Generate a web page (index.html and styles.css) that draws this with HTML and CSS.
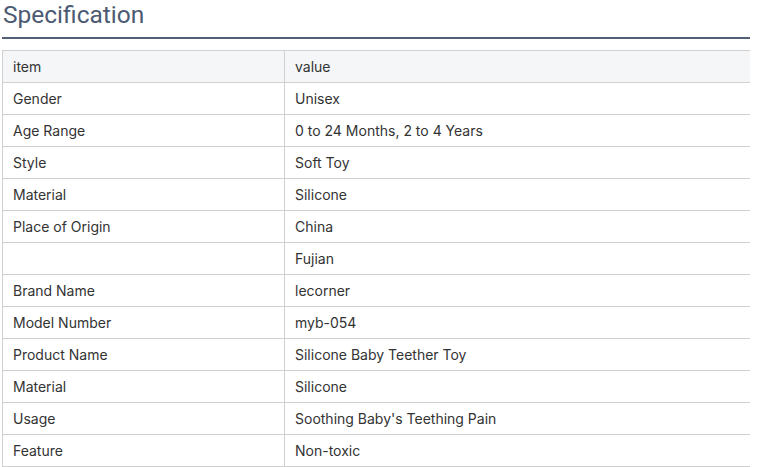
FILE: index.html
```html
<!DOCTYPE html>
<html>
<head>
<meta charset="utf-8">
<link rel="stylesheet" href="styles.css">
</head>
<body>
<div class="spec">
  <h2 class="title">Specification</h2>
  <table class="grid">
    <tr class="head"><td>item</td><td>value</td></tr>
    <tr><td>Gender</td><td>Unisex</td></tr>
    <tr><td>Age Range</td><td>0 to 24 Months, 2 to 4 Years</td></tr>
    <tr><td>Style</td><td>Soft Toy</td></tr>
    <tr><td>Material</td><td>Silicone</td></tr>
    <tr><td>Place of Origin</td><td>China</td></tr>
    <tr><td></td><td>Fujian</td></tr>
    <tr><td>Brand Name</td><td>lecorner</td></tr>
    <tr><td>Model Number</td><td>myb-054</td></tr>
    <tr><td>Product Name</td><td>Silicone Baby Teether Toy</td></tr>
    <tr><td>Material</td><td>Silicone</td></tr>
    <tr><td>Usage</td><td>Soothing Baby's Teething Pain</td></tr>
    <tr><td>Feature</td><td>Non-toxic</td></tr>
  </table>
</div>
</body>
</html>
```
FILE: styles.css
```css
html, body { margin: 0; padding: 0; background: #fff; }
.spec { width: 748px; margin-left: 2px; }
.title {
  margin: 0;
  font-family: Roboto, "Noto Sans", sans-serif;
  font-weight: 400;
  font-size: 24.5px;
  line-height: 30px;
  padding: 0 0 0 1px;
  height: 37px;
  color: #4c5a72;
  border-bottom: 2px solid #525f74;
}
.grid {
  margin-top: 11px;
  width: 748px;
  border-collapse: collapse;
  font-family: Inter, "Noto Sans", sans-serif;
  font-size: 14px;
  color: #333;
}
.grid td {
  height: 31px;
  padding: 0 0 0 10px;
  border-top: 1px solid #d0d0d0;
  border-bottom: 1px solid #d0d0d0;
  vertical-align: middle;
}
.grid td:first-child { width: 271px; border-left: 1px solid #d0d0d0; border-right: 1px solid #d0d0d0; }
.grid .head td { background: #f5f6f8; }
```
